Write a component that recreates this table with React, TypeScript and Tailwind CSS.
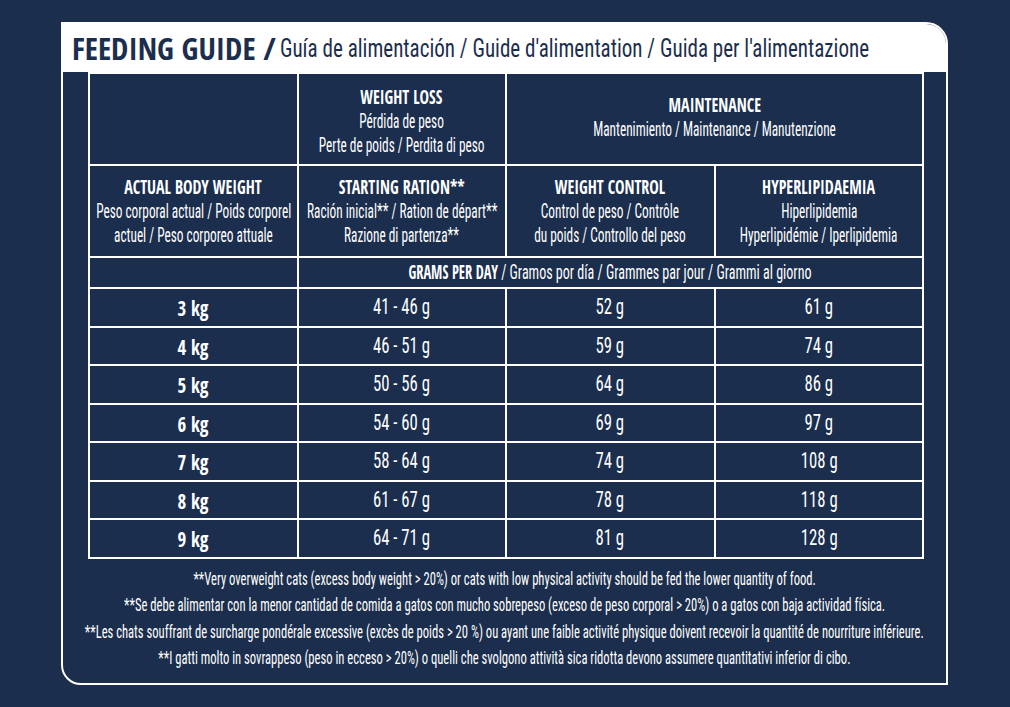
const REG = "font-['Roboto_Condensed','Liberation_Sans',sans-serif] font-normal";
const BOLD = "font-['Open_Sans_Condensed','Roboto_Condensed',sans-serif] font-bold";

const rows = [
  { kg: "3 kg", loss: "41 - 46 g", control: "52 g", lipid: "61 g" },
  { kg: "4 kg", loss: "46 - 51 g", control: "59 g", lipid: "74 g" },
  { kg: "5 kg", loss: "50 - 56 g", control: "64 g", lipid: "86 g" },
  { kg: "6 kg", loss: "54 - 60 g", control: "69 g", lipid: "97 g" },
  { kg: "7 kg", loss: "58 - 64 g", control: "74 g", lipid: "108 g" },
  { kg: "8 kg", loss: "61 - 67 g", control: "78 g", lipid: "118 g" },
  { kg: "9 kg", loss: "64 - 71 g", control: "81 g", lipid: "128 g" },
];

const notes = [
  "**Very overweight cats (excess body weight > 20%) or cats with low physical activity should be fed the lower quantity of food.",
  "**Se debe alimentar con la menor cantidad de comida a gatos con mucho sobrepeso (exceso de peso corporal > 20%) o a gatos con baja actividad física.",
  "**Les chats souffrant de surcharge pondérale excessive (excès de poids > 20 %) ou ayant une faible activité physique doivent recevoir la quantité de nourriture inférieure.",
  "**I gatti molto in sovrappeso (peso in ecceso > 20%) o quelli che svolgono attività sica ridotta devono assumere quantitativi inferior di cibo.",
];

// bold heading line inside a cell
function Head({ children }: { children: React.ReactNode }) {
  return (
    <div className={`${BOLD} text-[20px] leading-[24px] scale-x-[0.8] whitespace-nowrap`}>
      {children}
    </div>
  );
}

// regular line inside a cell
function Line({ children }: { children: React.ReactNode }) {
  return (
    <div className={`${REG} text-[20px] leading-[24px] scale-x-[0.665] whitespace-nowrap`}>
      {children}
    </div>
  );
}

function Cell({ children, className = "" }: { children?: React.ReactNode; className?: string }) {
  return (
    <div className={`bg-[#1b2e4d] text-white flex flex-col items-center justify-center text-center ${className}`}>
      {children}
    </div>
  );
}

export default function App() {
  return (
    <div className="w-[1010px] h-[707px] bg-[#1b2e4d] pt-[22px] pl-[61px] overflow-hidden">
      <div className="w-[887px] h-[663px] border-2 border-white rounded-tr-[22px] rounded-bl-[20px] overflow-hidden flex flex-col">
        {/* title bar */}
        <div className="h-[48px] bg-white flex items-center pl-[9px] text-[#1b2e4d] whitespace-nowrap">
          <span className={`${BOLD} text-[31px] leading-none`}>FEEDING GUIDE /</span>
          <span className={`${REG} inline-block text-[26px] leading-none ml-[4px] origin-left scale-x-[0.81]`}>
            Guía de alimentación / Guide d'alimentation / Guida per l'alimentazione
          </span>
        </div>

        {/* table */}
        <div className="ml-[25px] w-[836px] bg-white p-[2px] grid grid-cols-4 grid-rows-[90px_90px_29px_repeat(7,36.5px)] gap-[2px]">
          <Cell />
          <Cell className="pt-[4px]">
            <Head>WEIGHT LOSS</Head>
            <Line>Pérdida de peso</Line>
            <Line>Perte de poids / Perdita di peso</Line>
          </Cell>
          <Cell className="col-span-2 pb-[4px]">
            <Head>MAINTENANCE</Head>
            <Line>Mantenimiento / Maintenance / Manutenzione</Line>
          </Cell>

          <Cell>
            <Head>ACTUAL BODY WEIGHT</Head>
            <Line>Peso corporal actual / Poids corporel</Line>
            <Line>actuel / Peso corporeo attuale</Line>
          </Cell>
          <Cell>
            <Head>STARTING RATION**</Head>
            <Line>Ración inicial** / Ration de départ**</Line>
            <Line>Razione di partenza**</Line>
          </Cell>
          <Cell>
            <Head>WEIGHT CONTROL</Head>
            <Line>Control de peso / Contrôle</Line>
            <Line>du poids / Controllo del peso</Line>
          </Cell>
          <Cell>
            <Head>HYPERLIPIDAEMIA</Head>
            <Line>Hiperlipidemia</Line>
            <Line>Hyperlipidémie / Iperlipidemia</Line>
          </Cell>

          <Cell />
          <Cell className="col-span-3">
            <div className="scale-x-[0.72] whitespace-nowrap leading-[24px]">
              <span className={`${BOLD} text-[20px]`}>GRAMS PER DAY</span>
              <span className={`${REG} text-[19.5px]`}> / Gramos por día / Grammes par jour / Grammi al giorno</span>
            </div>
          </Cell>

          {rows.map((r) => (
            <div key={r.kg} className="contents">
              <Cell>
                <div className={`${BOLD} text-[22px] leading-[26px] scale-x-[0.86] whitespace-nowrap`}>{r.kg}</div>
              </Cell>
              {[r.loss, r.control, r.lipid].map((v, i) => (
                <Cell key={i}>
                  <div className={`${REG} text-[22px] leading-[26px] scale-x-[0.76] whitespace-nowrap`}>{v}</div>
                </Cell>
              ))}
            </div>
          ))}
        </div>

        {/* footnotes */}
        <div className="flex-1 pt-[7px] text-white flex flex-col items-center">
          {notes.map((n) => (
            <div key={n} className={`${REG} text-[18px] leading-[26.5px] scale-x-[0.7] whitespace-nowrap`}>
              {n}
            </div>
          ))}
        </div>
      </div>
    </div>
  );
}
